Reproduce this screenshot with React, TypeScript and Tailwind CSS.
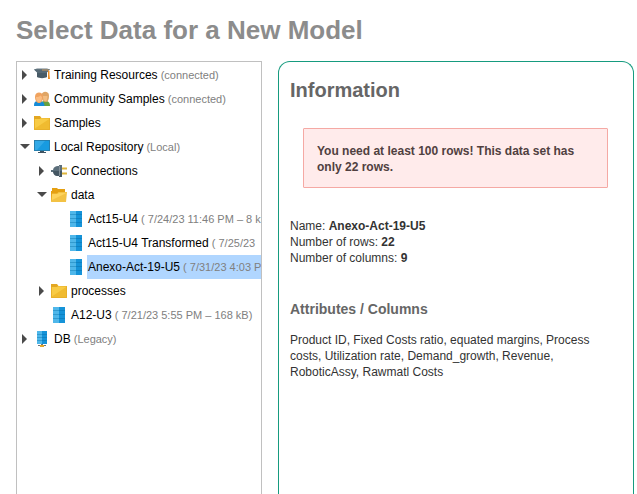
import React, { useState } from "react";

type IconName = "cap" | "people" | "folder" | "open" | "screen" | "plug" | "data" | "db";

interface Entry {
  name: string;
  note?: string;
  icon: IconName;
  level: 1 | 2 | 3;
  state?: "closed" | "expanded";
}

const entries: Entry[] = [
  { name: "Training Resources", note: "(connected)", icon: "cap", level: 1, state: "closed" },
  { name: "Community Samples", note: "(connected)", icon: "people", level: 1, state: "closed" },
  { name: "Samples", icon: "folder", level: 1, state: "closed" },
  { name: "Local Repository", note: "(Local)", icon: "screen", level: 1, state: "expanded" },
  { name: "Connections", icon: "plug", level: 2, state: "closed" },
  { name: "data", icon: "open", level: 2, state: "expanded" },
  { name: "Act15-U4", note: "( 7/24/23 11:46 PM – 8 kB)", icon: "data", level: 3 },
  { name: "Act15-U4 Transformed", note: "( 7/25/23", icon: "data", level: 3 },
  { name: "Anexo-Act-19-U5", note: "( 7/31/23 4:03 PM", icon: "data", level: 3 },
  { name: "processes", icon: "folder", level: 2, state: "closed" },
  { name: "A12-U3", note: "( 7/21/23 5:55 PM – 168 kB)", icon: "data", level: 2 },
  { name: "DB", note: "(Legacy)", icon: "db", level: 1, state: "closed" },
];

const indent = { 1: "pl-0", 2: "pl-[17px]", 3: "pl-[34px]" };

function Icon({ name }: { name: IconName }) {
  return (
    <svg viewBox="0 0 16 16" className="size-4 shrink-0" aria-hidden="true">
      {name === "cap" && (
        <>
          <path d="M3 4v6c2 1.500 8 1.500 10 0V4z" fill="#485b67" />
          <path d="M0 2.500 3 1.500h10l3 1-3 3H3z" fill="#6b7c87" />
          <path d="M0 2.500h16L12 6H4z" fill="#566975" />
          <path d="M8 3h6.500v5" fill="none" stroke="#c99a62" />
          <path d="M14 4h1.500v4l.5 4h-2z" fill="#ef8f24" />
        </>
      )}
      {name === "people" && (
        <>
          <path d="M7 15c0-4 1-5 4-5 4 0 5 2 5 5z" fill="#65a040" />
          <path d="M7.500 4.500c0-5 7.500-5 7.500 0 0 4-1 6.500-3.500 6.500s-4-3-4-6.500z" fill="#dfa565" />
          <path d="M9 5h4.500c0 3-.5 5-2.200 5S9 8 9 5z" fill="#f3bd82" />
          <path d="M0 15c0-4 1-5 5-5s5.500 2 5.500 5z" fill="#158bd6" />
          <path d="M1 5.500C1 0 9 0 9 5.500c0 4-1.500 6.500-4 6.500s-4-2.500-4-6.500z" fill="#f0a35f" />
          <path d="M2 6c2 0 3.500-.5 4.500-1.500L8 6c0 3-1 5-3 5S2 9 2 6z" fill="#fbbd82" />
        </>
      )}
      {name === "folder" && (
        <>
          <path d="M0 1h6l1.500 2H16v12H0z" fill="#e3a722" />
          <path d="M0 4h6l1-1 9 1v11H0z" fill="#f0bb30" />
          <path d="M0 4h6l1-.500h9L0 14z" fill="#f8cb45" />
          <path d="M.5 4v10.500h15V3.500" fill="none" stroke="#e8b02a" />
        </>
      )}
      {name === "open" && (
        <>
          <path d="M1 1h5l1 1h7v12H0V4h1z" fill="#e5a012" />
          <path d="M1 6.500h5L7.500 5H16l-1 10H0z" fill="#f3c244" />
          <path d="M1 7h5.500L8 6h7.500L1 13z" fill="#fdd35d" />
        </>
      )}
      {name === "screen" && (
        <>
          <path d="M0 1h16v11H0z" fill="#267fae" />
          <path d="M1 2h14v9H1z" fill="#189be0" />
          <path d="M1 2h10L3 11H1z" fill="#32a9e7" />
          <path d="M6 12h4v1h2v1H4v-1h2z" fill="#405461" />
        </>
      )}
      {name === "plug" && (
        <>
          <path d="M0 7h2c.5-3 2.500-4 5-4h1V2h3v12H8v-1H7c-2.500 0-4.500-1-5-4H0z" fill="#5b6e7a" />
          <path d="M2 8h9v6H8v-1H7c-3 0-4.500-2-5-5z" fill="#455763" />
          <path d="M8.500 3v10" stroke="#85929a" />
          <path d="M11 5.500h5M11 10.500h5" stroke="#dfb63d" strokeWidth="2" />
        </>
      )}
      {name === "data" && (
        <>
          <path d="M2 0h12v16H2z" fill="#1593d8" />
          <path d="M2 0h6v16H2z" fill="#4fb7ea" />
          <path d="M2 3.500h6M2 7.500h6M2 11.500h6" stroke="#329bcf" />
          <path d="M8 3.500h6M8 7.500h6M8 11.500h6" stroke="#0e82c3" />
        </>
      )}
      {name === "db" && (
        <>
          <path d="M3 0h10v13H3z" fill="#1593d8" />
          <path d="M3 0h5v13H3z" fill="#4fb7ea" />
          <path d="M3 3.500h5M3 6.500h5M3 9.500h5" stroke="#329bcf" />
          <path d="M8 3.500h5M8 6.500h5M8 9.500h5" stroke="#0e82c3" />
          <path d="M7 13h2v1H7zM4 14h8v1H4z" fill="#69757d" />
          <path d="M6 14h4v2H6z" fill="#e7a92b" />
        </>
      )}
    </svg>
  );
}

function TreeRow({ entry, selected, onSelect }: { entry: Entry; selected: boolean; onSelect: () => void }) {
  return (
    <li
      role="treeitem"
      aria-selected={selected}
      aria-level={entry.level}
      aria-expanded={entry.state ? entry.state === "expanded" : undefined}
      className={`flex h-6 items-center gap-px ${indent[entry.level]}`}
    >
      {entry.state ? (
        <button type="button" aria-label={`Toggle ${entry.name}`} className="flex size-4 shrink-0 items-center justify-center">
          <svg viewBox="0 0 10 10" className="size-2.5" aria-hidden="true">
            <path d={entry.state === "expanded" ? "M0 2h10L5 7z" : "M2 0v10l5-5z"} fill="#4a4a4a" />
          </svg>
        </button>
      ) : (
        <span className="w-4 shrink-0" />
      )}
      <Icon name={entry.icon} />
      <button
        type="button"
        onClick={onSelect}
        className={`ml-0.5 h-6 min-w-0 flex-1 overflow-hidden px-px text-left whitespace-nowrap ${selected ? "bg-[#b0d6ff]" : ""}`}
      >
        {entry.name}
        {entry.note && <span className="text-[11px] text-[#808080]"> {entry.note}</span>}
      </button>
    </li>
  );
}

export default function App() {
  const [selected, setSelected] = useState("Anexo-Act-19-U5");
  return (
    <main className="flex min-h-screen flex-col bg-white pr-[3px] pl-4 font-['Liberation_Sans',Arial,sans-serif] text-xs">
      <h1 className="py-3.5 text-[26px] leading-[33px] font-bold text-[#8c8c8c]">Select Data for a New Model</h1>
      <div className="flex flex-1 gap-4">
        <ul role="tree" aria-label="Repositories" className="w-[246px] shrink-0 border border-b-0 border-[#c0c0c0] pt-px text-black">
          {entries.map((entry) => (
            <TreeRow key={entry.name} entry={entry} selected={entry.name === selected} onSelect={() => setSelected(entry.name)} />
          ))}
        </ul>
        <section className="min-w-0 flex-1 rounded-t-xl border border-b-0 border-[#169b7f] pt-4 pr-3 pl-[11px] text-[#333333]">
          <h2 className="text-xl leading-6 font-bold text-[#666666]">Information</h2>
          <p role="alert" className="mx-[13px] mt-[26px] rounded-[1px] border border-[#f5a9a4] bg-[#ffebeb] px-[13px] pt-3.5 pb-3 leading-4 font-bold text-[#504040]">
            You need at least 100 rows! This data set has only 22 rows.
          </p>
          <div className="mt-[30px] leading-4">
            <p>Name: <b>Anexo-Act-19-U5</b></p>
            <p>Number of rows: <b>22</b></p>
            <p>Number of columns: <b>9</b></p>
          </div>
          <h3 className="mt-[33px] text-sm leading-5 font-bold text-[#666666]">Attributes / Columns</h3>
          <p className="mt-[13px] leading-4">
            Product ID, Fixed Costs ratio, equated margins, Process costs, Utilization rate, Demand_growth, Revenue, RoboticAssy, Rawmatl Costs
          </p>
        </section>
      </div>
    </main>
  );
}
